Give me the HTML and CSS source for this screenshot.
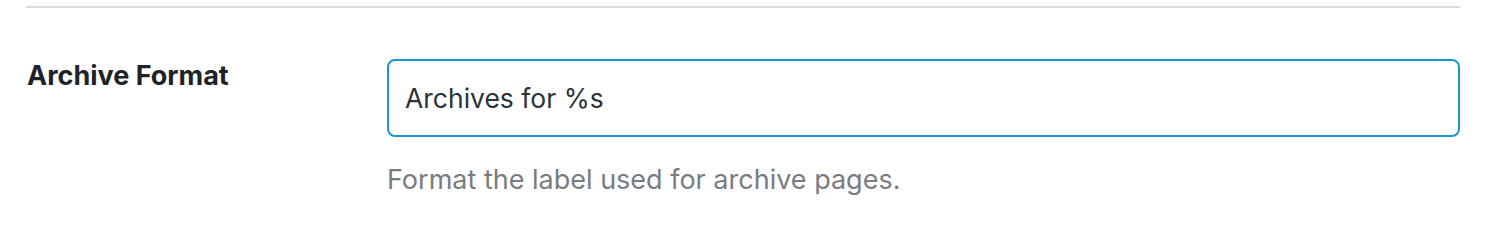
FILE: index.html
```html
<!DOCTYPE html>
<html>
<head>
<meta charset="utf-8">
<link rel="stylesheet" href="styles.css">
</head>
<body>
<div class="page">
  <div class="divider"></div>
  <div class="field-row">
    <label class="field-label" for="archive-format">Archive Format</label>
    <div class="field-control">
      <input id="archive-format" class="text-input" type="text" value="Archives for %s">
      <p class="field-desc">Format the label used for archive pages.</p>
    </div>
  </div>
</div>
</body>
</html>
```
FILE: styles.css
```css
html, body {
  margin: 0;
  padding: 0;
  background: #ffffff;
}
.page {
  padding: 6px 38px 0 26px;
  font-family: Inter, "Noto Sans", sans-serif;
}
.divider {
  height: 2px;
  background: #dcdcde;
}
.field-row {
  display: flex;
  padding-top: 51px;
}
.field-label {
  width: 360px;
  flex: none;
  font-size: 27px;
  font-weight: 700;
  color: #1d2327;
  line-height: 32px;
  padding-top: 1px;
  padding-left: 1px;
}
.field-control {
  flex: 1;
}
.text-input {
  display: block;
  box-sizing: border-box;
  width: 100%;
  height: 78px;
  margin: 0;
  padding: 0 16px;
  border: 2px solid #1e95d4;
  border-radius: 8px;
  font-family: inherit;
  font-size: 26.5px;
  color: #2c3338;
  background: #fff;
  outline: none;
}
.field-desc {
  margin: 27px 0 0 0;
  font-size: 27px;
  line-height: 32px;
  color: #787c82;
}
```
